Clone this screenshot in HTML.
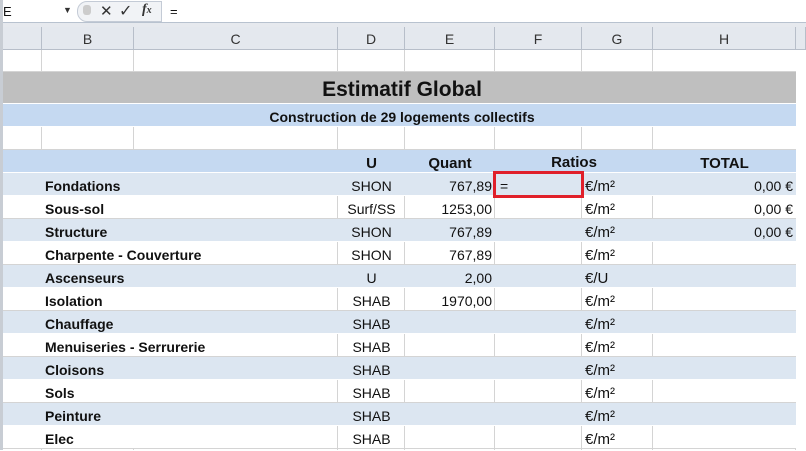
<!DOCTYPE html>
<html><head><meta charset="utf-8"><style>
*{margin:0;padding:0;box-sizing:border-box}
body{width:806px;height:450px;overflow:hidden;background:#fff;font-family:"Liberation Sans",sans-serif;font-size:14px;color:#111;position:relative}
.a{position:absolute}
.row{position:absolute;left:0;width:796px;height:23px}
.t{position:absolute;white-space:nowrap;line-height:23px;font-size:14px;margin-top:2px}
.vl{position:absolute;width:1px;background:#d4d4d4}
.b{font-weight:bold}
</style></head><body>
<div class="a" style="left:0;top:0;width:806px;height:23px;background:#fff;border-bottom:1px solid #b8c2cf"></div>
<div class="a" style="left:3px;top:4px;font-size:13px">E</div>
<div class="a" style="left:63px;top:5px;font-size:9px;color:#333">▼</div>
<div class="a" style="left:77px;top:1px;width:85px;height:21px;border:1px solid #c4cbd6;border-radius:10px 0 0 10px;background:#f1f3f6"></div>
<div class="a" style="left:83px;top:5px;width:8px;height:10px;border-radius:3px;background:#ccc"></div>
<div class="a" style="left:100px;top:2px;font-size:15px;color:#333">✕</div>
<div class="a" style="left:119px;top:1px;font-size:16px;color:#333">✓</div>
<div class="a" style="left:142px;top:2px;font-size:14px;font-style:italic;font-family:'Liberation Serif',serif;font-weight:bold;color:#333">f<span style="font-size:10px">x</span></div>
<div class="a" style="left:170px;top:4px;font-size:13px">=</div>
<div class="a" style="left:0;top:23px;width:806px;height:4px;background:#e6e9ee"></div>
<div class="a" style="left:0;top:27px;width:806px;height:23px;background:#e4e8ee;border-bottom:1px solid #b7bec9"></div>
<div id="hdr"></div>
<div class="a" style="left:0;top:0;width:3px;height:450px;background:#c8cdd4"></div>
<script>
const cols=[0,42,134,338,405,495,582,653,796,806];
const names=['','B','C','D','E','F','G','H',''];
let h='';
for(let i=0;i<names.length;i++){
 h+=`<div class="a" style="left:${cols[i]}px;top:27px;width:${cols[i+1]-cols[i]}px;height:23px;line-height:24px;text-align:center;color:#333;font-size:14px;border-right:1px solid #b7bec9">${names[i]}</div>`;
}
for(let i=1;i<cols.length-1;i++){h+=`<div class="vl" style="left:${cols[i]-1}px;top:50px;height:400px"></div>`;}
function row(top,hgt,bg){h+=`<div class="row" style="top:${top}px;height:${hgt}px;background:${bg};border-bottom:1px solid ${bg=='#fff'?'#d4d4d4':'#fff'}"></div>`;}
row(50,22,'#fff');
row(72,32,'#bfbfbf');
row(104,23,'#c5d9f1');
row(127,23,'#fff');
row(150,23,'#c5d9f1');
const data=[
['Fondations','SHON','767,89','€/m²','0,00 €'],
['Sous-sol','Surf/SS','1253,00','€/m²','0,00 €'],
['Structure','SHON','767,89','€/m²','0,00 €'],
['Charpente - Couverture','SHON','767,89','€/m²',''],
['Ascenseurs','U','2,00','€/U',''],
['Isolation','SHAB','1970,00','€/m²',''],
['Chauffage','SHAB','','€/m²',''],
['Menuiseries - Serrurerie','SHAB','','€/m²',''],
['Cloisons','SHAB','','€/m²',''],
['Sols','SHAB','','€/m²',''],
['Peinture','SHAB','','€/m²',''],
['Elec','SHAB','','€/m²','']];
let y=173;
data.forEach((d,i)=>{
 const bg=i%2==0?'#dce6f1':'#fff';
 row(y,23,bg);
 if(bg=='#fff'){for(const c of [338,405,495,582,653]){ h+=`<div class="vl" style="left:${c-1}px;top:${y}px;height:23px"></div>`;}}
 h+=`<div class="t b" style="left:45px;top:${y}px">${d[0]}</div>`;
 h+=`<div class="t" style="left:338px;width:67px;text-align:center;top:${y}px">${d[1]}</div>`;
 h+=`<div class="t" style="left:405px;width:87px;text-align:right;top:${y}px">${d[2]}</div>`;
 h+=`<div class="t" style="left:585px;top:${y}px;font-size:15px">${d[3]}</div>`;
 h+=`<div class="t" style="left:653px;width:140px;text-align:right;top:${y}px">${d[4]}</div>`;
 y+=23;
});
for(const yy of [50,127]) for(const c of [42,134,338,405,495,582,653]) h+=`<div class="vl" style="left:${c-1}px;top:${yy}px;height:22px"></div>`;
h+=`<div class="t b" style="left:0;width:796px;text-align:center;top:75px;font-size:21px;line-height:26px;padding-left:8px">Estimatif Global</div>`;
h+=`<div class="t b" style="left:0;width:796px;text-align:center;top:104px;font-size:14px;padding-left:8px">Construction de 29 logements collectifs</div>`;
h+=`<div class="t b" style="left:338px;width:67px;text-align:center;top:150px;font-size:15px">U</div>`;
h+=`<div class="t b" style="left:405px;width:90px;text-align:center;top:150px;font-size:15px">Quant</div>`;
h+=`<div class="t b" style="left:495px;width:158px;text-align:center;top:149px;font-size:15px">Ratios</div>`;
h+=`<div class="t b" style="left:653px;width:143px;text-align:center;top:150px;font-size:15px">TOTAL</div>`;
h+=`<div class="t" style="left:500px;top:173px">=</div>`;
h+=`<div class="a" style="left:493px;top:171px;width:91px;height:27px;border:3px solid #e0202a"></div>`;
document.getElementById('hdr').outerHTML=h;
</script>
</body></html>
